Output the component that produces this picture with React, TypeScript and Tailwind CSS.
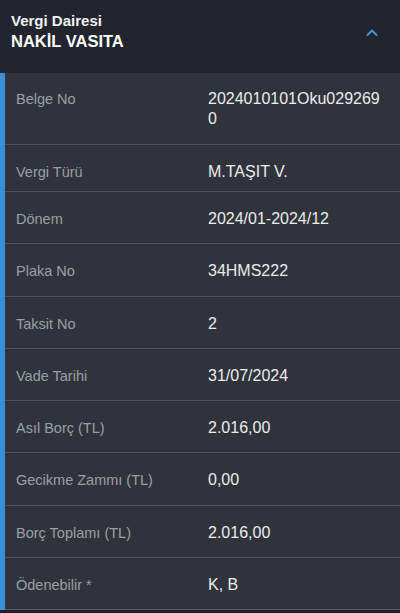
const rows: { label: string; value: string; h: string }[] = [
  { label: "Vergi Türü", value: "M.TAŞIT V.", h: "h-[47px]" },
  { label: "Dönem", value: "2024/01-2024/12", h: "h-[52px]" },
  { label: "Plaka No", value: "34HMS222", h: "h-[53px]" },
  { label: "Taksit No", value: "2", h: "h-[52px]" },
  { label: "Vade Tarihi", value: "31/07/2024", h: "h-[52px]" },
  { label: "Asıl Borç (TL)", value: "2.016,00", h: "h-[52px]" },
  { label: "Gecikme Zammı (TL)", value: "0,00", h: "h-[53px]" },
  { label: "Borç Toplamı (TL)", value: "2.016,00", h: "h-[52px]" },
  { label: "Ödenebilir *", value: "K, B", h: "h-[52px]" },
];

export default function App() {
  return (
    <div className="w-[400px] h-[613px] overflow-hidden bg-[#1f2128] font-['Liberation_Sans']">
      <header className="h-[73px] bg-[#22252d] flex items-center justify-between pl-[11px] pr-[21px] pb-[10px]">
        <div className="flex flex-col">
          <span className="text-[15px] leading-[19px] font-bold text-[#f2f2f4]">Vergi Dairesi</span>
          <span className="text-[16.5px] leading-[22px] font-bold text-white">NAKİL VASITA</span>
        </div>
        <svg width="14" height="9" viewBox="0 0 14 9" className="mt-[2px]">
          <path d="M2.5 7 L7 2.5 L11.5 7" fill="none" stroke="#4a8ed3" strokeWidth="2" strokeLinecap="round" strokeLinejoin="round" />
        </svg>
      </header>
      <div className="flex bg-[#30333b]">
        <div className="w-[5px] bg-[#3b8fd8] shrink-0" />
        <div className="flex-1 flex flex-col">
          <div className="h-[72px] flex pt-[16px] border-b border-[#52555d]">
            <div className="w-[203px] pl-[11px] text-[14.5px] leading-[20px] text-[#9c9fa6]">Belge No</div>
            <div className="w-[180px] text-[16px] leading-[20px] text-[#ececee] break-all">2024010101Oku0292690</div>
          </div>
          {rows.map((r) => (
            <div key={r.label} className={`${r.h} flex pt-[17px] border-b border-[#52555d]`}>
              <div className="w-[203px] pl-[11px] text-[14.5px] leading-[20px] text-[#9c9fa6]">{r.label}</div>
              <div className="flex-1 text-[16px] leading-[20px] text-[#ececee]">{r.value}</div>
            </div>
          ))}
        </div>
      </div>
    </div>
  );
}
